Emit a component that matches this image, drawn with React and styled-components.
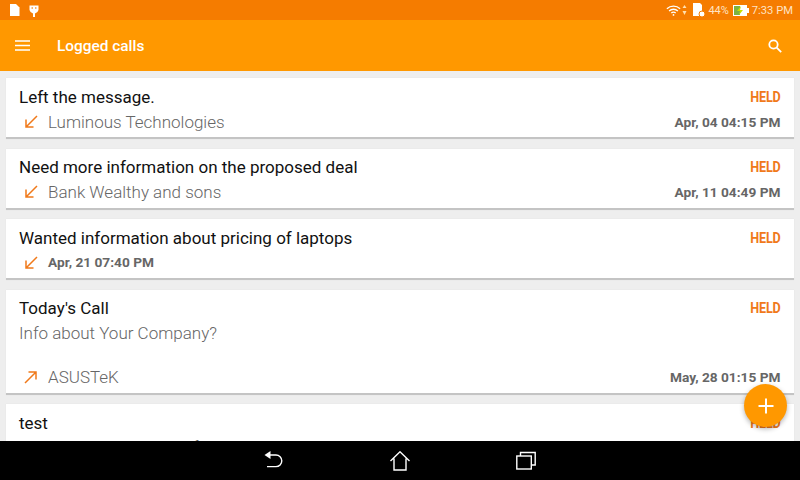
import React from 'react'
import styled, { createGlobalStyle } from 'styled-components'

const calls = [
  { id: 1, title: 'Left the message.', who: 'Luminous Technologies', when: 'Apr, 04 04:15 PM', dir: 'in' },
  { id: 2, title: 'Need more information on the proposed deal', who: 'Bank Wealthy and sons', when: 'Apr, 11 04:49 PM', dir: 'in' },
  { id: 3, title: 'Wanted information about pricing of laptops', when: 'Apr, 21 07:40 PM', dir: 'in' },
  { id: 4, title: "Today's Call", note: 'Info about Your Company?', who: 'ASUSTeK', when: 'May, 28 01:15 PM', dir: 'out' },
]

const Arrow = ({ dir }) => (
  <ArrowIcon viewBox="0 0 16 16">
    {dir === 'in'
      ? <path d="M14 2 L3 13 M3 5.5 V13 H10.5" />
      : <path d="M2 14 L13 3 M5.5 3 H13 V10.5" />}
  </ArrowIcon>
)

const App = () => {
  return (
    <Screen>
      <GlobalStyle />
      <StatusBar>
        <NotifyGroup>
          <svg width="11" height="12" viewBox="0 0 11 12"><path d="M1 0 H7 L10.5 3.5 V12 H1 Z" fill="#fff" /></svg>
          <svg width="10" height="13" viewBox="0 0 10 13"><path d="M0.5 1.5 H9.5 V6 A4.5 4.5 0 0 1 6 9.4 V13 H4 V9.4 A4.5 4.5 0 0 1 0.5 6 Z" fill="#fff" /><circle cx="3.2" cy="4" r="0.8" fill="#f57c00" /><circle cx="6.8" cy="4" r="0.8" fill="#f57c00" /></svg>
        </NotifyGroup>
        <StatusGroup>
          <svg width="15" height="13" viewBox="0 0 17 13" fill="none" stroke="#fff" strokeWidth="1.5"><path d="M1 4.5 A11 11 0 0 1 16 4.5 M3.5 7 A7.5 7.5 0 0 1 13.5 7 M6 9.3 A4 4 0 0 1 11 9.3" /><circle cx="8.5" cy="11.5" r="1" fill="#fff" stroke="none" /></svg>
          <DataIcon width="5" height="10" viewBox="0 0 5 10"><path d="M2.5 0 L4.5 3 H0.5 Z M2.5 10 L0.5 6 H4.5 Z" fill="#ffe0b2" /></DataIcon>
          <SdIcon width="13" height="14" viewBox="0 0 13 14"><path d="M1 0 H8 L10 2 V13 H1 Z" fill="#fff" /><circle cx="10" cy="11" r="3" fill="#fff" stroke="#f57c00" /></SdIcon>
          <StatusText>44%</StatusText>
          <BatteryIcon width="16" height="11" viewBox="0 0 16 11"><rect x="0.5" y="0.5" width="13" height="10" fill="#fff" stroke="#fff" /><rect x="1" y="1" width="6" height="9" fill="#7cb342" /><rect x="14" y="3" width="2" height="5" fill="#fff" /><path d="M8 1 L4 6 H7 L6 10 L10 5 H7 Z" fill="#c6e000" /></BatteryIcon>
          <Clock>7:33 PM</Clock>
        </StatusGroup>
      </StatusBar>
      <Toolbar>
        <MenuIcon viewBox="0 0 15 11"><path d="M0 1 H15 M0 5.5 H15 M0 10 H15" /></MenuIcon>
        <Title>Logged calls</Title>
        <SearchIcon viewBox="0 0 14 14"><circle cx="5.5" cy="5.5" r="4.2" /><path d="M8.7 8.7 L13.2 13.2" /></SearchIcon>
      </Toolbar>
      <List>
        {calls.map(call => (
          <Card key={call.id}>
            <TopRow>
              <CallTitle>{call.title}</CallTitle>
              <Status>HELD</Status>
            </TopRow>
            {call.note && <Note>{call.note}</Note>}
            <BottomRow $spaced={!!call.note}>
              <Arrow dir={call.dir} />
              {call.who
                ? <>
                    <Who>{call.who}</Who>
                    <When>{call.when}</When>
                  </>
                : <InlineWhen>{call.when}</InlineWhen>}
            </BottomRow>
          </Card>
        ))}
        <Card>
          <TopRow>
            <CallTitle>test</CallTitle>
            <Status>HELD</Status>
          </TopRow>
          <Note>Interest in Your New Software</Note>
        </Card>
      </List>
      <Fab>
        <svg width="16" height="16" viewBox="0 0 16 16"><path d="M8 0.5 V15.5 M0.5 8 H15.5" stroke="#fff" strokeWidth="2" /></svg>
      </Fab>
      <NavBar>
        <NavIcon viewBox="0 0 20 20"><path d="M3 4 H12 A5.8 5.8 0 0 1 12 15.6 H3" /><path d="M6.5 0 V8 L0.5 4 Z" fill="#fff" stroke="none" /></NavIcon>
        <NavIcon viewBox="0 0 20 20"><path d="M0.5 10 L10 0.8 L19.5 10 M4 7.5 V19 H16 V7.5" /></NavIcon>
        <NavIcon viewBox="0 0 20 20"><rect x="0.8" y="5" width="14.5" height="13" /><path d="M4.5 5 V1.5 H19.2 V14 H15.3" /></NavIcon>
      </NavBar>
    </Screen>
  )
}

export default App

const GlobalStyle = createGlobalStyle`
  html, body {
    margin: 0;
    padding: 0;
    background: #eeeeee;
  }
  * {
    box-sizing: border-box;
  }
`

const Screen = styled.div`
  position: relative;
  width: 800px;
  height: 480px;
  display: flex;
  flex-direction: column;
  overflow: hidden;
  background: #eeeeee;
  font-family: Roboto, "Liberation Sans", sans-serif;
`

const StatusBar = styled.div`
  height: 20px;
  flex: none;
  display: flex;
  align-items: center;
  justify-content: space-between;
  padding: 0 7px 0 9px;
  background: #f57c00;
  color: #ffe3c4;
`

const NotifyGroup = styled.div`
  display: flex;
  align-items: center;
  gap: 9px;
`

const StatusGroup = styled.div`
  display: flex;
  align-items: center;
  gap: 3px;
`

const DataIcon = styled.svg`
  margin-left: -2px;
`

const SdIcon = styled.svg`
  margin-left: 2px;
`

const StatusText = styled.span`
  font-size: 11px;
`

const BatteryIcon = styled.svg`
  margin-left: 1px;
`

const Clock = styled.span`
  font-size: 11.2px;
`

const Toolbar = styled.div`
  height: 51px;
  flex: none;
  display: flex;
  align-items: center;
  padding: 0 18px 0 15px;
  background: #ff9800;
  color: #fff;
`

const MenuIcon = styled.svg`
  width: 15px;
  height: 11px;
  fill: none;
  stroke: #fff;
  stroke-width: 1.5;
`

const Title = styled.div`
  flex: 1;
  margin-left: 27px;
  font-size: 15.4px;
  font-weight: 500;
`

const SearchIcon = styled.svg`
  width: 14px;
  height: 14px;
  fill: none;
  stroke: #fff;
  stroke-width: 1.8;
`

const List = styled.div`
  flex: 1;
  min-height: 0;
  display: flex;
  flex-direction: column;
  gap: 9.5px;
  padding: 7px 6.5px 0 6px;
  overflow: hidden;
`

const Card = styled.div`
  flex: none;
  padding: 8px 13px 4px;
  background: #fff;
  border-bottom: 2px solid #c4c4c4;
  box-shadow: 0 0 1px rgba(0, 0, 0, 0.08);
`

const TopRow = styled.div`
  display: flex;
  align-items: center;
  justify-content: space-between;
  height: 21px;
`

const CallTitle = styled.div`
  font-size: 17px;
  color: #111;
`

const Status = styled.div`
  font-size: 14px;
  font-weight: 700;
  letter-spacing: -0.2px;
  color: #f0791a;
  transform: scaleX(0.9);
  transform-origin: right center;
`

const Note = styled.div`
  margin-top: 4px;
  height: 20px;
  font-size: 17px;
  font-weight: 300;
  color: #666;
`

const BottomRow = styled.div`
  display: flex;
  align-items: center;
  height: 22px;
  margin-top: ${props => (props.$spaced ? '23px' : '3.5px')};
  margin-bottom: ${props => (props.$spaced ? '1px' : '0.5px')};
`

const ArrowIcon = styled.svg`
  width: 16px;
  height: 16px;
  margin: 0 9px 0 4px;
  flex: none;
  fill: none;
  stroke: #f0791a;
  stroke-width: 1.5;
`

const Who = styled.div`
  flex: 1;
  font-size: 17px;
  font-weight: 300;
  color: #666;
`

const When = styled.div`
  font-size: 13.7px;
  font-weight: 700;
  color: #666;
`

const InlineWhen = styled(When)`
  flex: 1;
  margin-bottom: 1px;
`

const Fab = styled.div`
  position: absolute;
  left: 744px;
  top: 384px;
  width: 43px;
  height: 43px;
  display: flex;
  align-items: center;
  justify-content: center;
  border-radius: 50%;
  background: #ff9800;
  box-shadow: 0 2px 5px rgba(0, 0, 0, 0.3);
`

const NavBar = styled.div`
  position: absolute;
  left: 0;
  right: 0;
  bottom: 0;
  height: 39px;
  display: flex;
  align-items: center;
  justify-content: center;
  gap: 106px;
  background: #000;
`

const NavIcon = styled.svg`
  width: 20px;
  height: 20px;
  fill: none;
  stroke: #fff;
  stroke-width: 1.4;
`
